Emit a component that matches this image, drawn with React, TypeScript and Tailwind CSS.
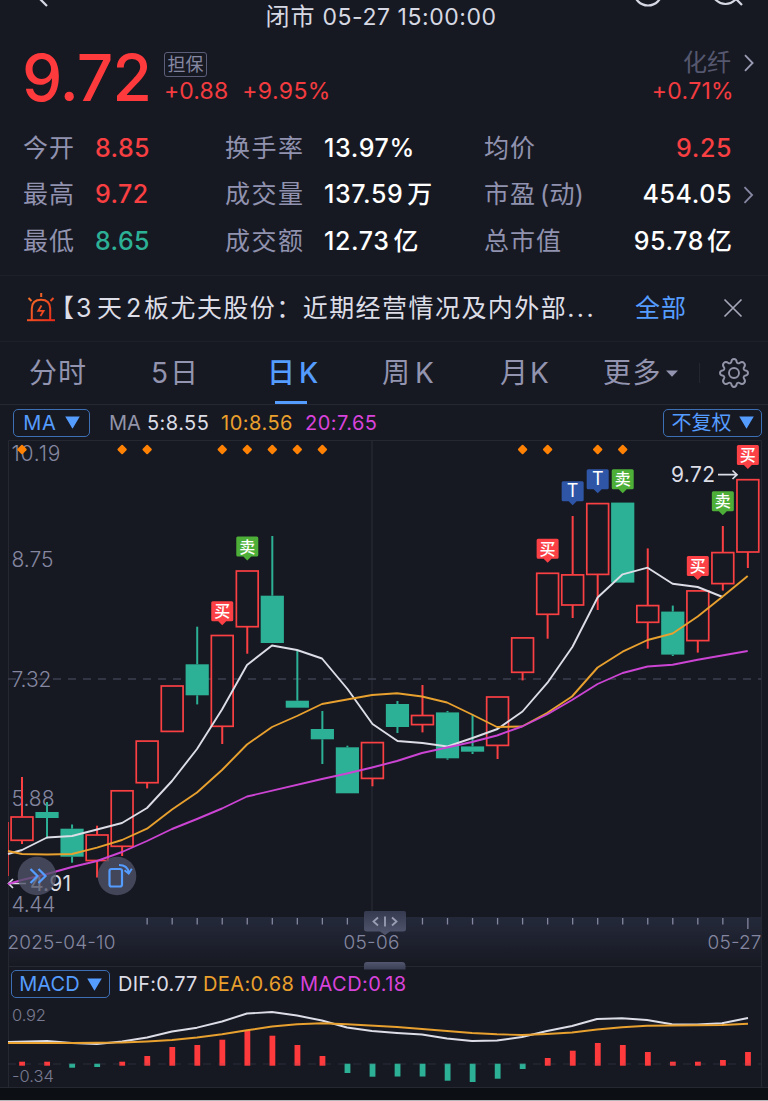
import React from "react";

type Candle = { up: boolean; top: number; bottom: number; high?: number; low?: number };

const xAt = (i: number) => 22 + 25.03 * i;

const R = (top: number, bottom: number, high?: number, low?: number): Candle => ({ up: true, top, bottom, high, low });
const G = (top: number, bottom: number, high?: number, low?: number): Candle => ({ up: false, top, bottom, high, low });

const candles: Candle[] = [
  R(816.7, 840.3, 777, 844), G(812, 818, 802, 838.5), G(828.7, 856.7, 824.5, 862.7), R(834.7, 860.5, 825.7, 877.5),
  R(790.5, 846.3, undefined, 856), R(740.8, 782.7, undefined, 788.4), R(685.7, 731.4), G(664.3, 695.3, 626.7, 704.4),
  R(635.2, 726.3, undefined, 744), R(570.7, 626.7, undefined, 653.7), G(595.7, 643, 536), G(700.7, 707.7, 650),
  G(729, 739.3, 711, 764), G(747.3, 793.3, 745.7), R(742.3, 778.4, undefined, 786.3), G(704, 727, 701, 733),
  R(715.2, 724.6, 685, 732.4), G(712.4, 758.3, 711, 759.7), G(746.4, 751.7, 714.4, 754), R(696.7, 745.4, undefined, 759),
  R(637.6, 672.3, undefined, 680.4), R(573, 614.3, undefined, 638.7), R(574.6, 605, 516, 618), R(503.3, 574.4, undefined, 610),
  G(502.6, 582.6), R(605.3, 622.3, 548.4, 648.7), G(611.6, 654.6, 605.6, 656), R(590.6, 640.6, undefined, 652.6),
  R(552.3, 583.6, 526, 590.6), R(479.4, 552, undefined, 568),
];

const ma5 =
  "8,854 22,850 47,837.5 72,836 97,829.5 122,823 147,808 172,781 197,749 222,709.5 247,665 272,645.5 297,650 322,658.5 347.5,689 372.5,724 397.5,741 422.5,743 447.5,746.5 472.5,738 497.5,729 522.5,711.5 547.5,682.7 572.5,646.7 597.6,597.5 622.6,574.3 647.6,567.7 672.6,583.7 697.7,587 722.7,597";
const ma10 =
  "8,851 22,854 47,854.5 72,854 97,847.7 122,840 147,828.7 172,809.5 197,792.5 222,770 247,744.5 272,727 297,716 322,704 347,699.5 372,695 397,693.3 422,696.5 447,702.5 472,714.5 497,727 522,726.5 547,713 572,696.5 597.6,667.5 622.6,651.7 647.6,640 672.6,633.5 697.7,616.5 722.7,596.5 747.7,576";
const ma20 =
  "8,884 22,880 47,874 72,867 97,861 122,852 147,841 172,829 197,819 222,808.5 247,796.5 322,779 347,773.5 372,767.5 397,761 422,753 447,747.5 472,742 497,735.5 522,726.5 547,714.5 572,700 597.6,684 622.6,673 647.6,666.5 672.6,664.7 697.7,659.7 747.7,651";
const dif =
  "8,1042 47,1041 72,1043 97,1044 122,1041.5 147,1037.5 172,1031.5 197,1027.7 222,1021.5 247,1013.5 272,1012 297,1015.5 322,1020.5 347,1027.5 372,1031 397,1033 422,1034.5 447,1038.5 472,1041 497,1040.5 522,1037 547,1031 572,1026 597,1019 622,1018.3 647,1020 672,1024.3 697,1024.5 722,1023.3 748,1018";
const dea =
  "8,1043 72,1043 122,1042.5 147,1041.5 172,1040 197,1037.5 222,1034.3 247,1030.3 272,1026.5 297,1024.3 322,1023.3 347,1024.3 397,1027 447,1031 472,1033 497,1034.3 522,1035 547,1034 572,1032.5 597,1029.5 622,1027.2 647,1025.8 722,1025 748,1023.7";

const macdBars = [
  1061.7, 1061.7, 1067.7, 1067, 1061.7, 1056, 1047, 1045, 1039.7, 1030.3, 1035.7, 1045, 1056, 1073, 1076.7, 1076.5,
  1076.5, 1080.7, 1082, 1078.7, 1069, 1058, 1050.7, 1043, 1045, 1052, 1061.7, 1061.7, 1060, 1052,
];

const diamonds = [0, 4, 5, 8, 9, 10, 11, 12, 20, 21, 23, 24];

const markers = [
  { i: 8, y: 601.3, t: "买", c: "#fb4146" },
  { i: 9, y: 536.5, t: "卖", c: "#4dae38" },
  { i: 21, y: 538.7, t: "买", c: "#fb4146" },
  { i: 22, y: 481.3, t: "T", c: "#2f56a6" },
  { i: 23, y: 469.3, t: "T", c: "#2f56a6" },
  { i: 24, y: 469.3, t: "卖", c: "#4dae38" },
  { i: 27, y: 556, t: "买", c: "#fb4146" },
  { i: 28, y: 491.3, t: "卖", c: "#4dae38" },
  { i: 29, y: 445, t: "买", c: "#fb4146" },
];

const yLabels = [
  { t: "10.19", y: 461, w: 49 },
  { t: "8.75", y: 567, w: 42 },
  { t: "7.32", y: 686.5, w: 40 },
  { t: "5.88", y: 805.5, w: 43 },
  { t: "4.44", y: 912, w: 44 },
];

function Chevron({ className }: { className: string }) {
  return (
    <svg className={className} viewBox="0 0 10 18" fill="none" stroke="currentColor" strokeWidth="1.8">
      <path d="M1 1.2 L8.6 9 L1 16.8" />
    </svg>
  );
}

function Down({ className }: { className: string }) {
  return (
    <svg className={className} viewBox="0 0 14 12" fill="#559cff">
      <path d="M0.2 0.3 H13.8 L7 11.8 Z" />
    </svg>
  );
}

function Header() {
  return (
    <header className="relative flex h-8 justify-center overflow-hidden pr-[6px] pt-1 text-[#d6d8e3]">
      <span className="h-[26px] whitespace-nowrap text-[23px] leading-[26px] tracking-[0.55px]">
        <span className="text-[24px] tracking-[1px]">闭市</span> 05-27 15:00:00
      </span>
      <svg className="absolute left-0 top-0 h-8 w-full" viewBox="0 0 768 32" fill="none" stroke="#d6d8e3" strokeWidth="2.2">
        <path d="M37 -4 L47 6" />
        <circle cx="648" cy="-8.5" r="14" />
        <circle cx="725.5" cy="-9.5" r="13.5" />
        <path d="M735 -2 L742 5" />
      </svg>
    </header>
  );
}

function Quote() {
  return (
    <section className="flex h-[92px] items-start justify-between pl-[22px] pr-[14px]">
      <div className="flex">
        <div className="w-[142px] whitespace-nowrap pt-2 text-[64px] font-medium leading-[76px] tracking-[-1px] text-[#ff3a3d]">9.72</div>
        <div className="pt-5">
          <div className="flex h-[25px] w-[43px] items-center justify-center rounded-[3px] border border-[#5b5e78] text-[18px] leading-none text-[#8688a3]">担保</div>
          <div className="flex gap-[14px] whitespace-nowrap text-[23px] leading-[28px] text-[#f43c40]">
            <span className="tracking-[0.1px]">+0.88</span>
            <span className="tracking-[0.4px]">+9.95%</span>
          </div>
        </div>
      </div>
      <div className="flex flex-col items-end pt-[17px]">
        <div className="flex items-center gap-[13px] text-[24px] leading-[28px] text-[#55576f]">
          <span>化纤</span>
          <Chevron className="h-[18px] w-[10px] text-[#9a9cb4]" />
        </div>
        <span className="pr-[20px] text-[23px] leading-[29px] tracking-[0.3px] text-[#f43c40]">+0.71%</span>
      </div>
    </section>
  );
}

const stats = [
  { a: "今开", av: "8.85", c: "text-[#f83f42]", b: "换手率", bv: "13.97%", bu: "", d: "均价", dv: "9.25", du: "", dc: "text-[#f83f42]", more: false },
  { a: "最高", av: "9.72", c: "text-[#f83f42]", b: "成交量", bv: "137.59", bu: "万", d: "市盈", dp: "(动)", dv: "454.05", du: "", dc: "text-white", more: true },
  { a: "最低", av: "8.65", c: "text-[#2cb196]", b: "成交额", bv: "12.73", bu: "亿", d: "总市值", dv: "95.78", du: "亿", dc: "text-white", more: false },
];

function Stats() {
  return (
    <section className="flex h-[151px] flex-col pt-[1px]">
      {stats.map((s) => (
        <div key={s.a} className="flex h-[46.5px] items-center whitespace-nowrap pl-[23px] text-[25px] leading-none">
          <span className="w-[72px] tracking-[1px] text-[#9092af]">{s.a}</span>
          <span className={`w-[130px] font-medium tracking-[0.4px] ${s.c}`}>{s.av}</span>
          <span className="w-[99px] tracking-[1.5px] text-[#9092af]">{s.b}</span>
          <span className="flex w-[160px] gap-1 font-medium tracking-[0.6px] text-white">
            <span>{s.bv}</span>
            {s.bu && <span>{s.bu}</span>}
          </span>
          <span className="flex gap-[4px] tracking-[1px] text-[#9092af]">
            {s.d}
            {s.dp && <span className="tracking-[0.3px]">{s.dp}</span>}
          </span>
          <span className={`ml-auto flex gap-[3px] font-medium tracking-[0.6px] ${s.dc}`}>
            <span>{s.dv}</span>
            {s.du && <span className="tracking-normal">{s.du}</span>}
          </span>
          <span className="flex w-9 pl-[11px]">{s.more && <Chevron className="h-[18px] w-[11px] text-[#8688a3]" />}</span>
        </div>
      ))}
    </section>
  );
}

function News() {
  return (
    <section className="flex h-[67px] items-center border-y border-[#1e2029] pl-[26px] text-[25px] leading-none text-[#dcdde6]">
      <svg className="-mt-[3px] h-[30px] w-[30px]" viewBox="0 0 30 30" fill="none" strokeWidth="2">
        <defs>
          <linearGradient id="siren" gradientUnits="userSpaceOnUse" x1="2" y1="4" x2="28" y2="28">
            <stop offset="0" stopColor="#f3742b" />
            <stop offset="1" stopColor="#ea2a18" />
          </linearGradient>
        </defs>
        <g stroke="url(#siren)">
          <path d="M1 28.2 H29" />
          <path d="M5.8 28 V16.5 Q6 7.800 15 7.800 Q24 7.800 24.200 16.500 V28" />
          <path d="M15.500 13.500 L12.300 18.800 H17.600 L14.500 24" strokeWidth="1.8" />
          <path d="M15.200 1 V5 M2.500 6 L5.500 9 M27.500 6 L24.500 9" />
        </g>
      </svg>
      <div className="flex w-[579px] whitespace-nowrap tracking-[1.45px]">
        <span className="-ml-[7px] w-[27px]">【</span>
        <span className="w-[21px]">3</span>
        <span className="w-[29px]">天</span>
        <span className="w-[18px]">2</span>
        <span>板尤夫股份：近期经营情况及内外部</span>
        <span className="tracking-[2.400px]">...</span>
      </div>
      <span className="w-[88px] tracking-[1px] text-[#559cff]">全部</span>
      <svg className="-mt-[2px] h-5 w-5" viewBox="0 0 20 20" stroke="#a5a7b8" strokeWidth="1.7">
        <path d="M1.500 1.500 L18.500 18.500 M18.500 1.500 L1.500 18.500" />
      </svg>
    </section>
  );
}

function Tabs() {
  return (
    <nav className="flex h-[63px] items-center whitespace-nowrap border-b border-[#252731] pl-[29px] text-[28px] leading-none text-[#9294b0]">
      <span className="w-[122px] tracking-[1px]">分时</span>
      <span className="flex w-[116px] gap-[2px]"><span>5</span>日</span>
      <span className="relative flex h-full w-[115px] items-center gap-1 font-medium text-[#559cff]">
        日<span>K</span>
        <i className="absolute bottom-0 left-[8px] h-[3px] w-8 bg-[#559cff]" />
      </span>
      <span className="flex w-[118px] gap-[5px]">周<span>K</span></span>
      <span className="flex w-[103px] gap-[2px]">月<span>K</span></span>
      <span className="w-[63px] tracking-[1.500px]">更多</span>
      <svg className="h-[7px] w-3" viewBox="0 0 12 7" fill="#9294b0"><path d="M0 0.500 H12 L6 6.800 Z" /></svg>
      <i className="ml-[21px] h-5 w-px bg-[#232530]" />
      <svg className="ml-[19px] h-[30px] w-[30px]" viewBox="0 0 30 30" fill="none" stroke="#9294a8" strokeWidth="1.900">
        <circle cx="15" cy="15" r="5" />
        <path strokeLinejoin="round" d="M12.200 4.300 Q12.600 1 15 1 Q17.400 1 17.800 4.300 Q18 5 18.700 5.200 Q19.800 5.700 20.600 5 Q23.200 3 24.900 4.900 Q27 6.800 25 9.400 Q24.300 10.200 24.800 11.300 Q25 12 25.700 12.200 Q29 12.600 29 15 Q29 17.400 25.700 17.800 Q25 18 24.800 18.700 Q24.300 19.800 25 20.600 Q27 23.200 25.100 25 Q23.200 27 20.600 25 Q19.800 24.300 18.700 24.800 Q18 25 17.800 25.700 Q17.400 29 15 29 Q12.600 29 12.200 25.700 Q12 25 11.300 24.800 Q10.200 24.300 9.400 25 Q6.800 27 5 25.100 Q3 23.200 5 20.600 Q5.700 19.800 5.200 18.700 Q5 18 4.300 17.800 Q1 17.400 1 15 Q1 12.600 4.300 12.200 Q5 12 5.200 11.300 Q5.700 10.200 5 9.400 Q3 6.800 4.900 4.900 Q6.800 3 9.400 5 Q10.200 5.700 11.300 5.200 Q12 5 12.200 4.300 Z" />
      </svg>
    </nav>
  );
}

function Legend() {
  return (
    <section className="flex h-[35px] items-center whitespace-nowrap pl-[13px] pr-[6px] text-[20px] leading-none">
      <button className="flex h-7 w-[77px] items-center justify-center gap-2 rounded-[5px] border border-[#3d6fb5] text-[#559cff]">
        <span className="tracking-[0.9px]">MA</span>
        <Down className="h-[13px] w-[15px]" />
      </button>
      <span className="ml-[19px] w-[38px] text-[#9294a8]">MA</span>
      <span className="w-[74px] tracking-[0.450px] text-[#dcdde6]">5:8.55</span>
      <span className="w-[84px] tracking-[0.500px] text-[#eaa02c]">10:8.56</span>
      <span className="tracking-[0.450px] text-[#d843db]">20:7.65</span>
      <button className="ml-auto flex h-7 w-[99px] items-center justify-center gap-[7px] rounded-[5px] border border-[#3d6fb5] text-[#559cff]">
        <span>不复权</span>
        <Down className="h-[13px] w-[15px]" />
      </button>
    </section>
  );
}

function KChart() {
  return (
    <svg className="block h-[530px] w-full" viewBox="0 440 768 530">
      <defs>
        <linearGradient id="axis" x1="0" y1="0" x2="0" y2="1">
          <stop offset="0" stopColor="#24293a" />
          <stop offset="1" stopColor="#171922" />
        </linearGradient>
        <linearGradient id="grip" x1="0" y1="0" x2="0" y2="1">
          <stop offset="0" stopColor="#353a50" />
          <stop offset="1" stopColor="#52566e" />
        </linearGradient>
        <linearGradient id="tab" x1="0" y1="0" x2="0" y2="1">
          <stop offset="0" stopColor="#52566e" />
          <stop offset="1" stopColor="#3a3f55" />
        </linearGradient>
      </defs>
      <rect x="8" y="917" width="754" height="49" fill="url(#axis)" />
      <g stroke="#252731">
        <path d="M8.500 966 V440.500 H761.500 V966" fill="none" />
        <path d="M372 441 V917" strokeWidth="1.500" />
        <path d="M8 966.500 H761.500 M8.500 966 V970 M761.500 966 V970" />
      </g>
      <path d="M8 679 H761" stroke="#3d3f50" strokeWidth="1.500" strokeDasharray="8 7" />
      {Array.from({ length: 25 }, (_, k) => k + 5).map((i) => (
        <path key={i} d={`M${xAt(i)} 918 V${i === 29 ? 929 : 924.5}`} stroke="#8587a0" strokeWidth="1.300" />
      ))}
      <g fontSize="21" fontWeight="300" fill="#8587a0">
        {yLabels.map((l) => (
          <text key={l.t} x="11.500" y={l.y} textLength={l.w}>{l.t}</text>
        ))}
      </g>
      <g fontSize="19" fontWeight="300" fill="#8587a0">
        <text x="7.500" y="948.500" textLength="108">2025-04-10</text>
        <text x="343.500" y="948.500" textLength="56">05-06</text>
        <text x="707.500" y="948.500" textLength="54">05-27</text>
      </g>
      <path d="M8.500 822 V876" stroke="#c9363c" />
      {candles.map((c, i) => {
        const x = xAt(i);
        const col = c.up ? "#fb4043" : "#2cb196";
        return (
          <g key={i} stroke={col} strokeWidth="2">
            {c.high !== undefined && <path d={`M${x} ${c.high} V${c.top}`} />}
            {c.low !== undefined && <path d={`M${x} ${c.bottom} V${c.low}`} />}
            {c.up ? (
              <rect x={x - 10.900} y={c.top + 0.300} width="21.800" height={c.bottom - c.top - 0.300} fill="none" strokeWidth="1.700" />
            ) : (
              <rect x={x - 11.600} y={c.top} width="23.200" height={c.bottom - c.top} fill={col} stroke="none" />
            )}
          </g>
        );
      })}
      {diamonds.map((i) => (
        <rect key={i} x={xAt(i) - 3.600} y="445.900" width="7.200" height="7.200" rx="1" fill="#ff8204" transform={`rotate(45 ${xAt(i)} 449.5)`} />
      ))}
      <g fontSize="21" fontWeight="400" fill="#dcdde6">
        <text x="671" y="482" textLength="44">9.72</text>
        <text x="30" y="890.500" textLength="41">4.91</text>
      </g>
      <path d="M718 474.700 H737 M732.500 470.500 L737 474.700 L732.500 479 M26 883.500 H9 M13 879 L8.500 883.500 L13 888" fill="none" stroke="#dcdde6" strokeWidth="1.700" />
      <g fill="none" strokeWidth="1.900" strokeLinejoin="round">
        <polyline points={ma5} stroke="#dcdde6" />
        <polyline points={ma10} stroke="#e8a02e" />
        <polyline points={ma20} stroke="#cb44d3" />
      </g>
      <g fill="#4f5268" fillOpacity="0.780">
        <circle cx="37" cy="876" r="19.300" />
        <circle cx="117" cy="876" r="19.300" />
      </g>
      <g fill="none" stroke="#559cff" strokeWidth="2.200">
        <path d="M30.500 869 L37.500 876 L30.500 883 M38.500 869 L45.500 876 L38.500 883" />
        <rect x="109.500" y="869" width="12.500" height="17.500" rx="2" />
        <path d="M119 865 Q127.500 865 128.700 872.500 M124.500 870.300 L128.700 873.500 L131.800 868.800" strokeWidth="2" />
      </g>
      {markers.map((m) => {
        const x = xAt(m.i);
        return (
          <g key={m.i}>
            <path d={`M${x - 9.5} ${m.y} h19 q1.5 0 1.5 1.5 v17 q0 1.500 -1.5 1.5 h-5.500 l-4 4 l-4 -4 h-5.500 q-1.5 0 -1.5 -1.5 v-17 q0 -1.5 1.5 -1.5 z`} fill={m.c} />
            <text x={x} y={m.y + 16} fontSize={m.t === "T" ? 18 : 16} fontWeight={m.t === "T" ? 400 : 500} textAnchor="middle" fill="#fff">{m.t}</text>
          </g>
        );
      })}
      <path d="M366 911 H404 Q406 911 406 913 V929 Q406 931.500 403 931.500 H390 L385 935 L380 931.500 H367 Q364 931.500 364 929 V913 Q364 911 366 911 Z" fill="url(#grip)" />
      <path d="M378 917.500 L373.500 921.500 L378 925.500 M392 917.500 L396.500 921.500 L392 925.500 M385 916.500 V926.500" fill="none" stroke="#9a9db3" strokeWidth="1.800" />
      <path d="M364 969.500 V965 Q364 962 367 962 H402 Q405.500 962 405.500 966 V969.500 Z" fill="url(#tab)" />
    </svg>
  );
}

function Macd() {
  return (
    <section>
      <div className="ml-2 mr-[6px] flex h-7 items-center whitespace-nowrap border-x border-[#252731] pl-[2px] text-[20px] leading-none">
        <button className="flex h-7 w-[99px] items-center justify-center gap-[7px] rounded-[5px] border border-[#3d6fb5] text-[#559cff]">
          <span className="tracking-[0.100px]">MACD</span>
          <Down className="h-[13px] w-[15px]" />
        </button>
        <span className="ml-2 w-[85px] tracking-[0.200px] text-[#dcdde6]">DIF:0.77</span>
        <span className="w-[97px] tracking-[0.400px] text-[#eaa02c]">DEA:0.68</span>
        <span className="tracking-[0.450px] text-[#d843db]">MACD:0.18</span>
      </div>
      <svg className="block h-[90px] w-full" viewBox="0 998 768 90">
        <path d="M8.500 998 V1087.500 M761.500 998 V1087.500 M0 1087.500 H768" stroke="#252731" fill="none" />
        <g fontSize="16.500" fontWeight="300" fill="#777a90">
          <text x="12" y="1021" textLength="34">0.92</text>
          <text x="12" y="1082" textLength="42">-0.34</text>
        </g>
        {macdBars.map((v, i) => {
          const up = v < 1064;
          return <rect key={i} x={xAt(i) - 2.800} y={up ? v : 1063.700} width="5.800" height={up ? 1065.700 - v : v - 1063.700} fill={up ? "#ff3a3d" : "#2cb196"} />;
        })}
        <path d="M8 1064 H761" stroke="#555a70" strokeOpacity="0.300" strokeDasharray="8 7" />
        <g fill="none" strokeWidth="1.900" strokeLinejoin="round">
          <polyline points={dif} stroke="#dcdde6" />
          <polyline points={dea} stroke="#e8a02e" />
        </g>
      </svg>
    </section>
  );
}

export default function App() {
  return (
    <main className="flex h-[1101px] w-[768px] flex-col overflow-hidden bg-[#171922] font-[Inter,'Noto_Sans_CJK_SC',sans-serif]">
      <Header />
      <Quote />
      <Stats />
      <News />
      <Tabs />
      <Legend />
      <KChart />
      <Macd />
      <div className="h-3 bg-[#0c0f14]" />
      <div className="h-px bg-[#b5b6b8]" />
    </main>
  );
}
